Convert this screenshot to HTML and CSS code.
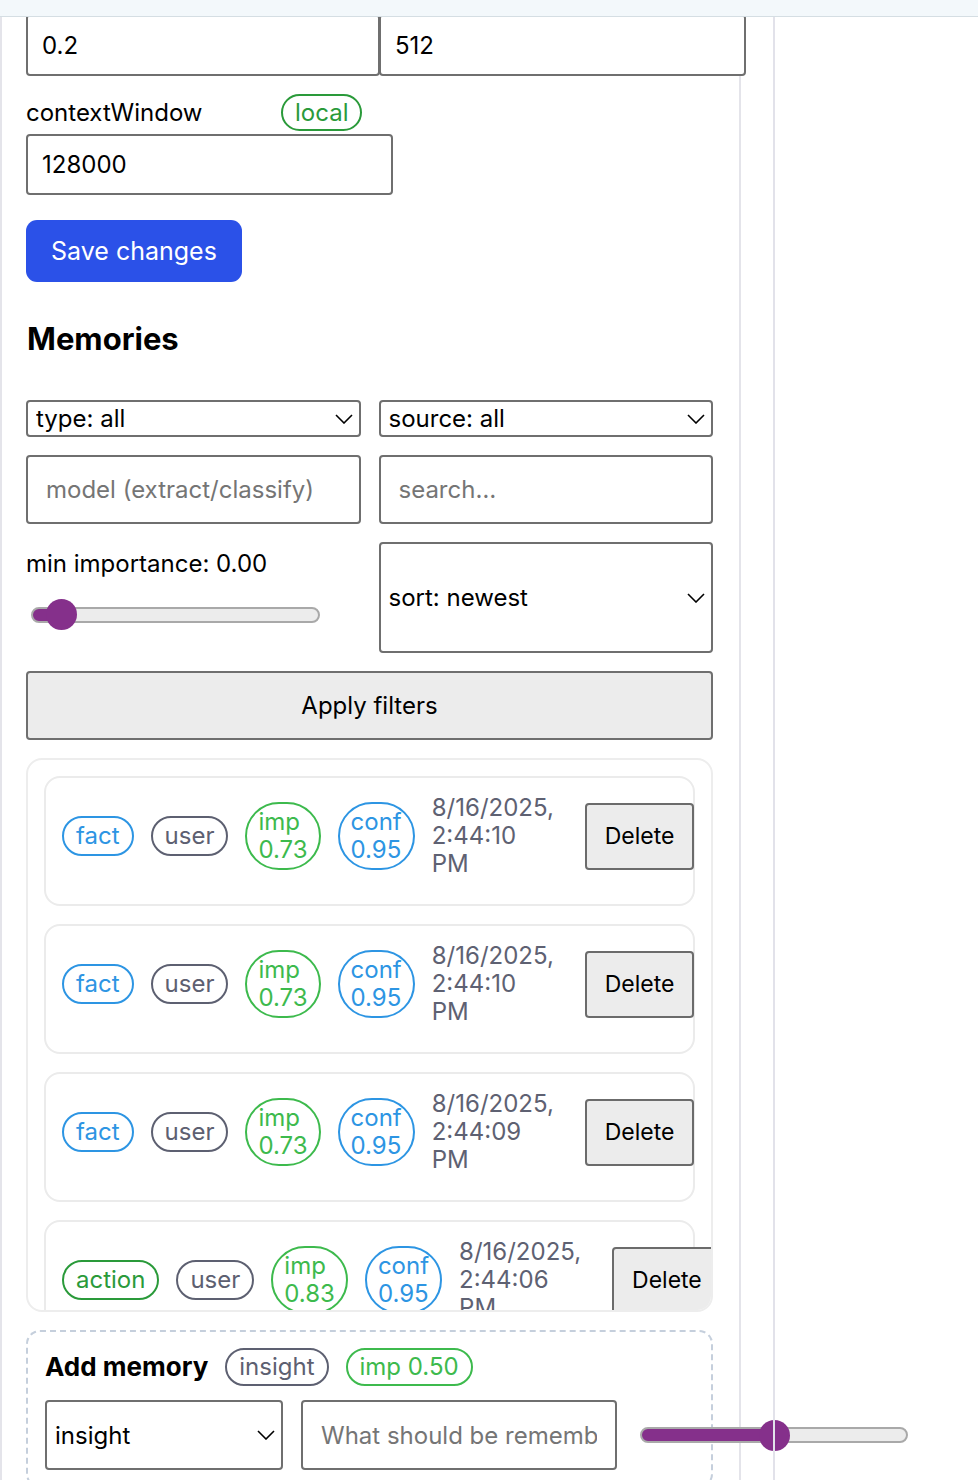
FILE: index.html
```html
<!DOCTYPE html>
<html lang="en">
<head>
<meta charset="utf-8">
<title>Memories</title>
<link rel="stylesheet" href="styles.css">
</head>
<body>
<div class="topbar"></div>
<div class="layout">
  <section class="panel">
    <div class="row-top">
      <input class="field field-a" value="0.2">
      <input class="field field-b" value="512">
    </div>
    <div class="label-row">
      <span class="label label-ctx">contextWindow</span>
      <span class="pill pill-local">local</span>
    </div>
    <input class="field field-ctx" value="128000">
    <button class="btn-primary">Save changes</button>

    <h2 class="heading">Memories</h2>

    <div class="filters">
      <select class="select"><option>type: all</option></select>
      <select class="select"><option>source: all</option></select>
      <input class="field field-tall" placeholder="model (extract/classify)">
      <input class="field field-tall" placeholder="search…">
      <div class="imp-col">
        <div class="label">min importance: 0.00</div>
        <input type="range" class="range range-min" min="0" max="100" value="5" style="--fill:31px">
      </div>
      <select class="select select-sort"><option>sort: newest</option></select>
    </div>
    <button class="btn-apply">Apply filters</button>

    <div class="list">
      <div class="card">
        <span class="pill pill-blue">fact</span>
        <span class="pill pill-gray">user</span>
        <span class="pill pill-green stack">imp 0.73</span>
        <span class="pill pill-blue stack">conf 0.95</span>
        <div class="date"><span>8/16/2025, 2:44:10 PM</span></div>
        <button class="btn-del">Delete</button>
      </div>
      <div class="card">
        <span class="pill pill-blue">fact</span>
        <span class="pill pill-gray">user</span>
        <span class="pill pill-green stack">imp 0.73</span>
        <span class="pill pill-blue stack">conf 0.95</span>
        <div class="date"><span>8/16/2025, 2:44:10 PM</span></div>
        <button class="btn-del">Delete</button>
      </div>
      <div class="card">
        <span class="pill pill-blue">fact</span>
        <span class="pill pill-gray">user</span>
        <span class="pill pill-green stack">imp 0.73</span>
        <span class="pill pill-blue stack">conf 0.95</span>
        <div class="date"><span>8/16/2025, 2:44:09 PM</span></div>
        <button class="btn-del">Delete</button>
      </div>
      <div class="card">
        <span class="pill pill-action">action</span>
        <span class="pill pill-gray">user</span>
        <span class="pill pill-green stack">imp 0.83</span>
        <span class="pill pill-blue stack">conf 0.95</span>
        <div class="date"><span>8/16/2025, 2:44:06 PM</span></div>
        <button class="btn-del">Delete</button>
      </div>
    </div>

    <div class="add-box">
      <div class="add-head">
        <h3 class="add-title">Add memory</h3>
        <span class="pill pill-gray pill-sm">insight</span>
        <span class="pill pill-green pill-sm">imp 0.50</span>
      </div>
      <div class="add-row">
        <select class="select select-add"><option>insight</option></select>
        <input class="field field-add" placeholder="What should be remembered?">
        <input type="range" class="range range-add" min="0" max="100" value="50" style="--fill:134px">
      </div>
    </div>
  </section>
  <div class="divider"></div>
</div>
</body>
</html>
```

FILE: styles.css
```css
* { box-sizing: border-box; }

html, body {
  margin: 0;
  background: #ffffff;
}

body {
  font-family: "Inter", "Liberation Sans", sans-serif;
  font-size: 24px;
  color: #000;
  overflow: hidden;
  height: 1480px;
}

.topbar {
  position: relative;
  z-index: 2;
  height: 17px;
  background: #f3f8fb;
  border-bottom: 1px solid #d5dee3;
}

.layout {
  display: flex;
  align-items: stretch;
}

.panel {
  flex: 0 0 741px;
  width: 741px;
  border-left: 2px solid #e4e4ea;
  border-right: 2px solid #e4e4ea;
  padding: 0 26px 40px 24px;
}

.divider {
  position: relative;
  z-index: 1;
  flex: 0 0 2px;
  margin-left: 32px;
  background: #e2e2ea;
}

/* fields */
.field {
  font: inherit;
  color: #000;
  border: 2px solid #6f6f6f;
  border-radius: 4px;
  background: #fff;
  padding: 0 14px;
  outline: none;
  min-width: 0;
}
.field::placeholder { color: #757575; }

.row-top {
  display: flex;
  margin-top: -3px;
  height: 62px;
}
.field-a { flex: 0 0 354px; width: 354px; height: 62px; }
.field-b { flex: 0 0 367px; width: 367px; height: 62px; margin-left: -1px; }

.label-row {
  display: flex;
  align-items: center;
  margin-top: 18px;
  height: 37px;
}
.label { line-height: 28px; font-size: 24px; }
.label-ctx { width: 255px; }

.field-ctx {
  display: block;
  margin-top: 3px;
  width: 367px;
  height: 61px;
}

.btn-primary {
  display: block;
  margin-top: 25px;
  height: 62px;
  padding: 0 25px;
  border: none;
  border-radius: 11px;
  background: #2b51e8;
  color: #fff;
  font: inherit;
  font-size: 25px;
}

.heading {
  margin: 39px 0 0 1px;
  font-size: 31px;
  line-height: 36px;
  font-weight: 700;
}

/* filters */
.filters {
  margin-top: 43px;
  display: grid;
  grid-template-columns: 1fr 1fr;
  column-gap: 18px;
  row-gap: 18px;
}

.select {
  -webkit-appearance: none;
  appearance: none;
  font: inherit;
  color: #000;
  height: 37px;
  padding: 0 30px 0 8px;
  border: 2px solid #6f6f6f;
  border-radius: 4px;
  background-color: #fff;
  background-image: url("data:image/svg+xml,%3Csvg xmlns='http://www.w3.org/2000/svg' width='18' height='10' viewBox='0 0 18 10'%3E%3Cpath d='M1 1l8 8 8-8' fill='none' stroke='%23000' stroke-width='1.6'/%3E%3C/svg%3E");
  background-repeat: no-repeat;
  background-position: right 6px center;
  background-size: 18px 10px;
  outline: none;
  min-width: 0;
}

.field-tall {
  height: 69px;
  padding: 0 18px;
  width: 100%;
}

.imp-col {
  display: flex;
  flex-direction: column;
  padding-top: 8px;
}

.select-sort { height: 111px; }

/* range */
.range {
  -webkit-appearance: none;
  appearance: none;
  background: transparent;
  height: 31px;
  margin: 0;
  padding: 0;
  min-width: 0;
}
.range::-webkit-slider-runnable-track {
  height: 16px;
  box-sizing: border-box;
  border: 2px solid #a9a9a9;
  border-radius: 8px;
  background: linear-gradient(to right, #85308b var(--fill), #ececec var(--fill));
}
.range::-webkit-slider-thumb {
  -webkit-appearance: none;
  appearance: none;
  width: 31px;
  height: 31px;
  border-radius: 50%;
  background: #85308b;
  border: none;
  margin-top: -9.5px;
}
.range-min {
  width: 289px;
  margin: 21px 0 0 5px;
}

.btn-apply {
  display: block;
  width: 100%;
  height: 69px;
  margin-top: 18px;
  border: 2px solid #6f6f6f;
  border-radius: 4px;
  background: #ececec;
  color: #000;
  font: inherit;
}

/* list */
.list {
  margin-top: 18px;
  height: 554px;
  border: 2px solid #ededed;
  border-radius: 16px;
  padding: 16px;
  overflow: hidden;
  display: flex;
  flex-direction: column;
  gap: 18px;
}

.card {
  flex: 0 0 auto;
  display: flex;
  align-items: center;
  gap: 17px;
  border: 2px solid #ebebeb;
  border-radius: 16px;
  padding: 16px 16px 26px;
}

.pill {
  flex: 0 0 auto;
  display: inline-block;
  white-space: nowrap;
  border: 2px solid currentColor;
  border-radius: 999px;
  padding: 4px 12px;
  line-height: 28px;
}
.pill.stack {
  white-space: normal;
  width: min-content;
  padding: 4px 11px;
}
.pill-blue { color: #2d95e3; }
.pill-gray { color: #5d6071; }
.pill-green { color: #3dba4d; }
.pill-action { color: #2a9a3a; }
.pill-local {
  color: #2a9a3a;
  padding: 2px 12px;
  line-height: 29px;
}

.date {
  flex: 0 0 136px;
  color: #5e6172;
  line-height: 28px;
}
.date span {
  display: block;
  width: min-content;
}

.btn-del {
  flex: 0 0 auto;
  height: 67px;
  padding: 0 18px;
  border: 2px solid #6b6b6b;
  border-radius: 4px;
  background: #ececec;
  color: #000;
  font: inherit;
  font-size: 23px;
}

/* add memory */
.add-box {
  margin-top: 18px;
  border: 2px dashed #c5cfdc;
  border-radius: 14px;
  padding: 16px 17px;
}
.add-head {
  display: flex;
  align-items: center;
  gap: 17px;
}
.add-title {
  margin: 0;
  font-size: 26px;
  font-weight: 700;
  line-height: 28px;
}
.pill-sm { padding: 3px 12px; }

.add-row {
  display: flex;
  align-items: center;
  gap: 18px;
  margin-top: 14px;
  white-space: nowrap;
}
.select-add {
  flex: 0 0 238px;
  width: 238px;
  height: 70px;
}
.field-add {
  flex: 0 0 316px;
  width: 316px;
  height: 70px;
  padding: 0 18px;
}
.range-add {
  flex: 0 0 268px;
  width: 268px;
  margin-left: 5px;
}
```
